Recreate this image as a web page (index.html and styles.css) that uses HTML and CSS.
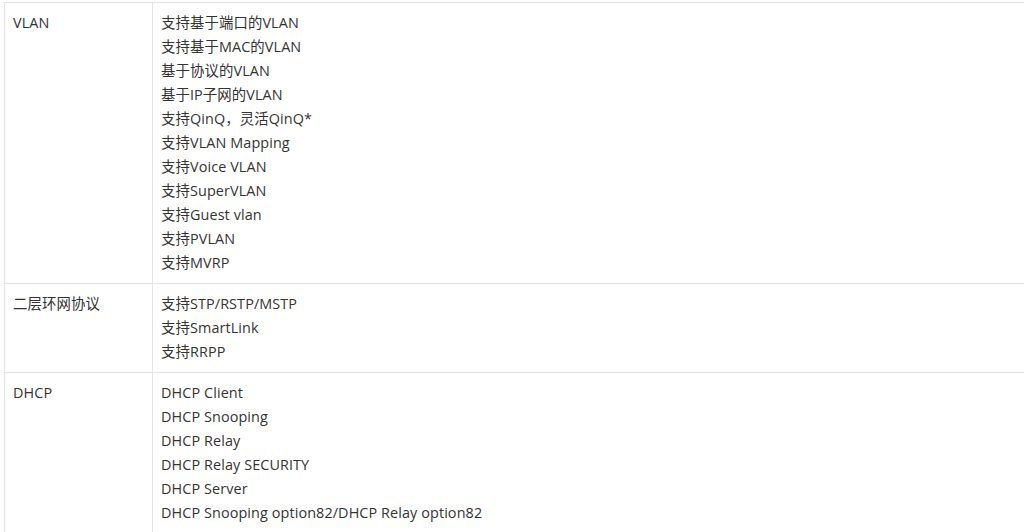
FILE: index.html
```html
<!DOCTYPE html>
<html lang="zh-CN">
  <head>
    <meta charset="UTF-8" />
    <meta name="viewport" content="width=device-width, initial-scale=1.0" />
    <title>功能特性</title>
    <link rel="stylesheet" href="styles.css">
  </head>
  <body>
    <div class="spec-wrap">
      <table class="spec-table">
        <tr>
          <td class="spec-name">VLAN</td>
          <td class="spec-value">
            支持基于端口的VLAN<br />
            支持基于MAC的VLAN<br />
            基于协议的VLAN<br />
            基于IP子网的VLAN<br />
            支持QinQ，灵活QinQ*<br />
            支持VLAN Mapping<br />
            支持Voice VLAN<br />
            支持SuperVLAN<br />
            支持Guest vlan<br />
            支持PVLAN<br />
            支持MVRP
          </td>
        </tr>
        <tr>
          <td class="spec-name">二层环网协议</td>
          <td class="spec-value">
            支持STP/RSTP/MSTP<br />
            支持SmartLink<br />
            支持RRPP
          </td>
        </tr>
        <tr>
          <td class="spec-name">DHCP</td>
          <td class="spec-value">
            DHCP Client<br />
            DHCP Snooping<br />
            DHCP Relay<br />
            DHCP Relay SECURITY<br />
            DHCP Server<br />
            DHCP Snooping option82/DHCP Relay option82
          </td>
        </tr>
      </table>
    </div>
  </body>
</html>
```

FILE: styles.css
```css
html,
body {
  margin: 0;
  background-color: #ffffff;
  overflow: hidden;
}
body {
  color: #333333;
  font-family: "Open Sans", "Noto Sans CJK SC", sans-serif;
  font-size: 14.4px;
  line-height: 24px;
  letter-spacing: 0.1px;
}
.spec-wrap {
  padding: 2px 0 0 4px;
}
.spec-table {
  border-collapse: collapse;
  width: 1040px;
}
.spec-table td {
  border: 1px solid #e3e3e3;
  padding: 8px 8px;
  vertical-align: top;
  text-align: left;
}
.spec-name {
  width: 131px;
}
.spec-value {
  padding-left: 9px;
}
```
